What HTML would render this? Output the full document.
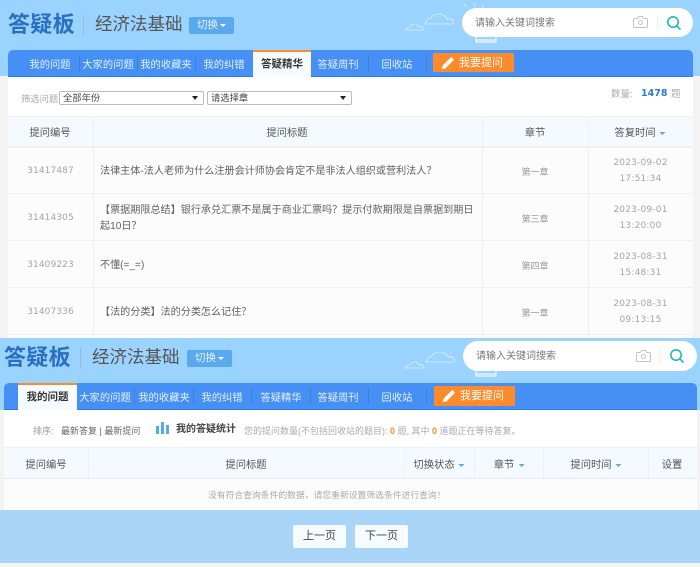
<!DOCTYPE html>
<html lang="zh">
<head>
<meta charset="utf-8">
<title>答疑板</title>
<style>
*{box-sizing:border-box;margin:0;padding:0}
html,body{width:700px;height:567px;overflow:hidden;background:#f3f3f3}
body{position:relative;font-family:"Liberation Sans","Noto Sans CJK SC",sans-serif;font-size:11px;color:#666;filter:blur(.3px)}
.a{position:absolute;white-space:nowrap}
.c{position:absolute;white-space:nowrap;text-align:center}
.tab{position:absolute;color:#e4f0ff;font-size:10.3px;text-align:center;white-space:nowrap;transform:translateX(-50%)}
.sep{position:absolute;width:1px;height:16px;background:#3a80dc}
.line{position:absolute;background:#eef1f4}
.th{position:absolute;font-size:10.3px;color:#555;text-align:center;white-space:nowrap;transform:translateX(-50%)}
.num{position:absolute;left:8px;width:85px;text-align:center;color:#a5a5a5;font-family:"DejaVu Sans",sans-serif;font-size:9px;letter-spacing:.1px;line-height:13px}
.q{position:absolute;left:100px;width:380px;color:#5f5f5f;font-size:10.1px;line-height:16px;white-space:nowrap}
.ch{position:absolute;left:482px;width:106px;text-align:center;color:#999;font-size:9px}
.tm{position:absolute;left:588px;width:105px;text-align:center;color:#a5a5a5;font-family:"DejaVu Sans",sans-serif;font-size:9px;line-height:16px;letter-spacing:.2px}
.tri{display:inline-block;width:0;height:0;border:3px solid transparent;border-top:3px solid #5aa8ee;border-bottom:0;vertical-align:middle;margin-left:4px}
.pill{position:absolute;background:#fff;border-radius:15px}
.sel{position:absolute;height:14px;background:#fff;border:1px solid #bbb;border-radius:2px;font-size:9.3px;color:#444;line-height:13px;padding-left:3px}
.sel i{position:absolute;right:5px;top:4px;width:0;height:0;border:3px solid transparent;border-top:4px solid #222;border-bottom:0}
.pg{position:absolute;top:525px;width:53px;height:23px;background:#f6fbff;border-radius:2px;text-align:center;line-height:23px;font-size:11px;color:#444}
</style>
</head>
<body>

<!-- TOP SECTION -->
<div class="a" style="left:0;top:0;width:700px;height:76px;background:#9bd3ff"></div>
<svg class="a" style="left:400px;top:0" width="110" height="50" viewBox="0 0 110 50" fill="none" stroke="#d8eefc" stroke-width=".8">
<path d="M25 24h28c2-4-3-6-6-5-2-6-13-7-16-1-3 0-5 3-6 6z"/>
<path d="M5 30h19c0-3-3-4-5-3-2-4-7-4-9 0-2 0-4 1-5 3z"/>
<path d="M64 4l3 3M74 3l1 4M84 5l-2 3"/>
<path d="M76 37v5h20v-5M76 40h20" stroke="#eef8ff" stroke-width="1.2"/>
</svg>
<div class="a" style="left:8px;top:11px;font-size:22px;font-weight:bold;color:#2a6fc2;line-height:28px;letter-spacing:.3px">答疑板</div>
<div class="a" style="left:83px;top:15px;width:1px;height:21px;background:#8bbfe6"></div>
<div class="a" style="left:95px;top:12px;font-size:17.5px;color:#555;line-height:25px">经济法基础</div>
<div class="c" style="left:189px;top:17px;width:45px;height:17px;background:#5aa8ee;border-radius:2px;color:#e6f3ff;font-size:10.5px;line-height:17px">切换<span style="display:inline-block;width:0;height:0;border:3px solid transparent;border-top:3px solid #fff;border-bottom:0;vertical-align:middle;margin-left:2px"></span></div>

<div class="pill" style="left:462px;top:8px;width:231px;height:29px"></div>
<div class="a" style="left:475px;top:16px;font-size:10px;color:#777;line-height:16px">请输入关键词搜索</div>
<svg class="a" style="left:633px;top:15px" width="15" height="14" viewBox="0 0 15 14" fill="none" stroke="#c4c4c4" stroke-width="1"><path d="M1.5 3.5h3l1-2h4l1 2h3a1 1 0 0 1 1 1v7a1 1 0 0 1-1 1h-12a1 1 0 0 1-1-1v-7a1 1 0 0 1 1-1z"/><circle cx="7.5" cy="7.5" r="2"/></svg>
<div class="a" style="left:657px;top:15px;width:1px;height:15px;background:#eee"></div>
<svg class="a" style="left:666px;top:15px" width="16" height="16" viewBox="0 0 16 16" fill="none" stroke="#1fb9c4" stroke-width="1.6"><circle cx="7" cy="7" r="5.2"/><path d="M11 11l3.5 3.5"/></svg>

<div class="a" style="left:8px;top:50px;width:685px;height:27px;background:#4690f5;border-radius:5px 5px 0 0;border-bottom:1px solid #2f7ce8"></div>
<div class="tab" style="left:50px;top:56px">我的问题</div>
<div class="sep" style="left:79px;top:55px"></div>
<div class="tab" style="left:108px;top:56px">大家的问题</div>
<div class="sep" style="left:137px;top:55px"></div>
<div class="tab" style="left:166px;top:56px">我的收藏夹</div>
<div class="sep" style="left:195px;top:55px"></div>
<div class="tab" style="left:224px;top:56px">我的纠错</div>
<div class="a" style="left:253px;top:50px;width:58px;height:27px;background:#f6fbff;border-top:2px solid #fd8a2b;text-align:center;font-size:10.5px;font-weight:bold;color:#333;line-height:24px">答疑精华</div>
<div class="tab" style="left:338px;top:56px">答疑周刊</div>
<div class="sep" style="left:368px;top:55px"></div>
<div class="tab" style="left:397px;top:56px">回收站</div>
<div class="sep" style="left:426px;top:55px"></div>
<div class="a" style="left:433px;top:53px;width:81px;height:19px;background:#fd8a2b;border-radius:1px"></div>
<svg class="a" style="left:441px;top:56px" width="14" height="14" viewBox="0 0 14 14" fill="#fff"><path d="M1 13l.8-3.6L9.6 1.6a1 1 0 0 1 1.4 0l1.4 1.4a1 1 0 0 1 0 1.4L4.6 12.2z"/></svg>
<div class="a" style="left:459px;top:56px;font-size:11px;color:#fff;line-height:14px">我要提问</div>

<div class="a" style="left:8px;top:77px;width:685px;height:261px;background:#fff"></div>
<div class="a" style="left:21px;top:92px;font-size:9.3px;color:#aaa;line-height:14px">筛选问题</div>
<div class="sel" style="left:59px;top:91px;width:145px">全部年份<i></i></div>
<div class="sel" style="left:207px;top:91px;width:145px">请选择章<i></i></div>
<div class="a" style="left:611px;top:88px;font-size:9.5px;color:#aaa;line-height:14px">数量:</div>
<div class="a" style="left:641px;top:87px;font-family:'DejaVu Sans',sans-serif;font-size:9.5px;font-weight:bold;color:#2a78d8;line-height:14px">1478</div>
<div class="a" style="left:671px;top:88px;font-size:9.5px;color:#aaa;line-height:14px">题</div>

<div class="a" style="left:8px;top:116px;width:685px;height:31px;background:#f4faff"></div>
<div class="a" style="left:8px;top:147px;width:685px;height:191px;background:#fcfcfc"></div>
<div class="line" style="left:8px;top:116px;width:685px;height:1px"></div>
<div class="line" style="left:8px;top:146px;width:685px;height:2px"></div>
<div class="line" style="left:8px;top:193px;width:685px;height:1px"></div>
<div class="line" style="left:8px;top:240px;width:685px;height:1px"></div>
<div class="line" style="left:8px;top:287px;width:685px;height:1px"></div>
<div class="line" style="left:8px;top:334px;width:685px;height:1px"></div>
<div class="line" style="left:93px;top:116px;width:1px;height:222px"></div>
<div class="line" style="left:482px;top:116px;width:1px;height:222px"></div>
<div class="line" style="left:588px;top:116px;width:1px;height:222px"></div>

<div class="th" style="left:50px;top:124px">提问编号</div>
<div class="th" style="left:287px;top:124px">提问标题</div>
<div class="th" style="left:535px;top:124px">章节</div>
<div class="th" style="left:640px;top:124px">答复时间<span class="tri"></span></div>

<div class="num" style="top:165px">31417487</div>
<div class="q" style="top:164px">法律主体-法人老师为什么注册会计师协会肯定不是非法人组织或营利法人？</div>
<div class="ch" style="top:165px">第一章</div>
<div class="tm" style="top:155px">2023-09-02<br>17:51:34</div>

<div class="num" style="top:212px">31414305</div>
<div class="q" style="top:203px">【票据期限总结】银行承兑汇票不是属于商业汇票吗？提示付款期限是自票据到期日<br>起10日？</div>
<div class="ch" style="top:212px">第三章</div>
<div class="tm" style="top:202px">2023-09-01<br>13:20:00</div>

<div class="num" style="top:259px">31409223</div>
<div class="q" style="top:258px">不懂(=_=)</div>
<div class="ch" style="top:259px">第四章</div>
<div class="tm" style="top:249px">2023-08-31<br>15:48:31</div>

<div class="num" style="top:306px">31407336</div>
<div class="q" style="top:305px">【法的分类】法的分类怎么记住？</div>
<div class="ch" style="top:306px">第一章</div>
<div class="tm" style="top:296px">2023-08-31<br>09:13:15</div>

<!-- BOTTOM SECTION -->
<div class="a" style="left:0;top:338px;width:700px;height:72px;background:#9bd3ff"></div>
<svg class="a" style="left:400px;top:338px" width="110" height="50" viewBox="0 0 110 50" fill="none" stroke="#d8eefc" stroke-width=".8">
<path d="M26 24h28c2-4-3-6-6-5-2-6-13-7-16-1-3 0-5 3-6 6z"/>
<path d="M5 30h19c0-3-3-4-5-3-2-4-7-4-9 0-2 0-4 1-5 3z"/>
<path d="M76 33v5h20v-5M76 36h20" stroke="#eef8ff" stroke-width="1.2"/>
</svg>
<div class="a" style="left:4px;top:344px;font-size:22px;font-weight:bold;color:#2a6fc2;line-height:28px;letter-spacing:.3px">答疑板</div>
<div class="a" style="left:80px;top:347px;width:1px;height:22px;background:#8bbfe6"></div>
<div class="a" style="left:92px;top:345px;font-size:17.5px;color:#555;line-height:25px">经济法基础</div>
<div class="c" style="left:187px;top:350px;width:45px;height:17px;background:#5aa8ee;border-radius:2px;color:#e6f3ff;font-size:10.5px;line-height:17px">切换<span style="display:inline-block;width:0;height:0;border:3px solid transparent;border-top:3px solid #fff;border-bottom:0;vertical-align:middle;margin-left:2px"></span></div>

<div class="pill" style="left:463px;top:341px;width:234px;height:30px"></div>
<div class="a" style="left:476px;top:349px;font-size:10px;color:#777;line-height:16px">请输入关键词搜索</div>
<svg class="a" style="left:636px;top:349px" width="15" height="14" viewBox="0 0 15 14" fill="none" stroke="#c4c4c4" stroke-width="1"><path d="M1.5 3.5h3l1-2h4l1 2h3a1 1 0 0 1 1 1v7a1 1 0 0 1-1 1h-12a1 1 0 0 1-1-1v-7a1 1 0 0 1 1-1z"/><circle cx="7.5" cy="7.5" r="2"/></svg>
<div class="a" style="left:659px;top:349px;width:1px;height:15px;background:#eee"></div>
<svg class="a" style="left:669px;top:348px" width="16" height="16" viewBox="0 0 16 16" fill="none" stroke="#1fb9c4" stroke-width="1.6"><circle cx="7" cy="7" r="5.2"/><path d="M11 11l3.5 3.5"/></svg>

<div class="a" style="left:4px;top:383px;width:693px;height:27px;background:#4690f5;border-radius:5px 5px 0 0;border-bottom:1px solid #2f7ce8"></div>
<div class="a" style="left:18px;top:383px;width:59px;height:27px;background:#f6fbff;border-top:2px solid #fd8a2b;text-align:center;font-size:10.5px;font-weight:bold;color:#333;line-height:24px">我的问题</div>
<div class="tab" style="left:105px;top:389px">大家的问题</div>
<div class="sep" style="left:134px;top:388px"></div>
<div class="tab" style="left:164px;top:389px">我的收藏夹</div>
<div class="sep" style="left:193px;top:388px"></div>
<div class="tab" style="left:222px;top:389px">我的纠错</div>
<div class="sep" style="left:251px;top:388px"></div>
<div class="tab" style="left:281px;top:389px">答疑精华</div>
<div class="sep" style="left:310px;top:388px"></div>
<div class="tab" style="left:338px;top:389px">答疑周刊</div>
<div class="sep" style="left:368px;top:388px"></div>
<div class="tab" style="left:397px;top:389px">回收站</div>
<div class="sep" style="left:426px;top:388px"></div>
<div class="a" style="left:434px;top:386px;width:81px;height:20px;background:#fd8a2b;border-radius:1px"></div>
<svg class="a" style="left:442px;top:389px" width="14" height="14" viewBox="0 0 14 14" fill="#fff"><path d="M1 13l.8-3.6L9.6 1.6a1 1 0 0 1 1.4 0l1.4 1.4a1 1 0 0 1 0 1.4L4.6 12.2z"/></svg>
<div class="a" style="left:460px;top:389px;font-size:11px;color:#fff;line-height:14px">我要提问</div>

<div class="a" style="left:4px;top:410px;width:693px;height:100px;background:#fff"></div>
<div class="a" style="left:33px;top:424px;font-size:9px;color:#999;line-height:14px">排序:</div>
<div class="a" style="left:61px;top:424px;font-size:9px;color:#666;line-height:14px">最新答复 | 最新提问</div>
<div class="a" style="left:156px;top:426px;width:3px;height:8px;background:#5aa8ee"></div>
<div class="a" style="left:161px;top:422px;width:3px;height:12px;background:#5aa8ee"></div>
<div class="a" style="left:166px;top:425px;width:3px;height:9px;background:#5aa8ee"></div>
<div class="a" style="left:176px;top:423px;font-size:10px;font-weight:bold;color:#444;line-height:14px">我的答疑统计</div>
<div class="a" style="left:244px;top:424px;font-size:9px;color:#aaa;line-height:14px">您的提问数量(不包括回收站的题目): <b style="color:#fd8a2b">0</b> 题, 其中 <b style="color:#fd8a2b">0</b> 道题正在等待答复。</div>

<div class="a" style="left:4px;top:447px;width:693px;height:31px;background:#f4faff"></div>
<div class="a" style="left:4px;top:478px;width:693px;height:32px;background:#fcfcfc"></div>
<div class="line" style="left:4px;top:447px;width:693px;height:1px"></div>
<div class="line" style="left:4px;top:478px;width:693px;height:1px;background:#e6eaee"></div>
<div class="line" style="left:88px;top:447px;width:1px;height:31px"></div>
<div class="line" style="left:404px;top:447px;width:1px;height:31px"></div>
<div class="line" style="left:474px;top:447px;width:1px;height:31px"></div>
<div class="line" style="left:543px;top:447px;width:1px;height:31px"></div>
<div class="line" style="left:648px;top:447px;width:1px;height:31px"></div>
<div class="th" style="left:46px;top:456px">提问编号</div>
<div class="th" style="left:246px;top:456px">提问标题</div>
<div class="th" style="left:439px;top:456px">切换状态<span class="tri"></span></div>
<div class="th" style="left:509px;top:456px">章节<span class="tri"></span></div>
<div class="th" style="left:596px;top:456px">提问时间<span class="tri"></span></div>
<div class="th" style="left:672px;top:456px">设置</div>
<div class="a" style="left:208px;top:488px;font-size:8.8px;color:#aaa;line-height:14px">没有符合查询条件的数据，请您重新设置筛选条件进行查询！</div>

<div class="a" style="left:0;top:510px;width:700px;height:53px;background:#a8d5f8"></div>
<div class="pg" style="left:293px">上一页</div>
<div class="pg" style="left:355px">下一页</div>
</body>
</html>
